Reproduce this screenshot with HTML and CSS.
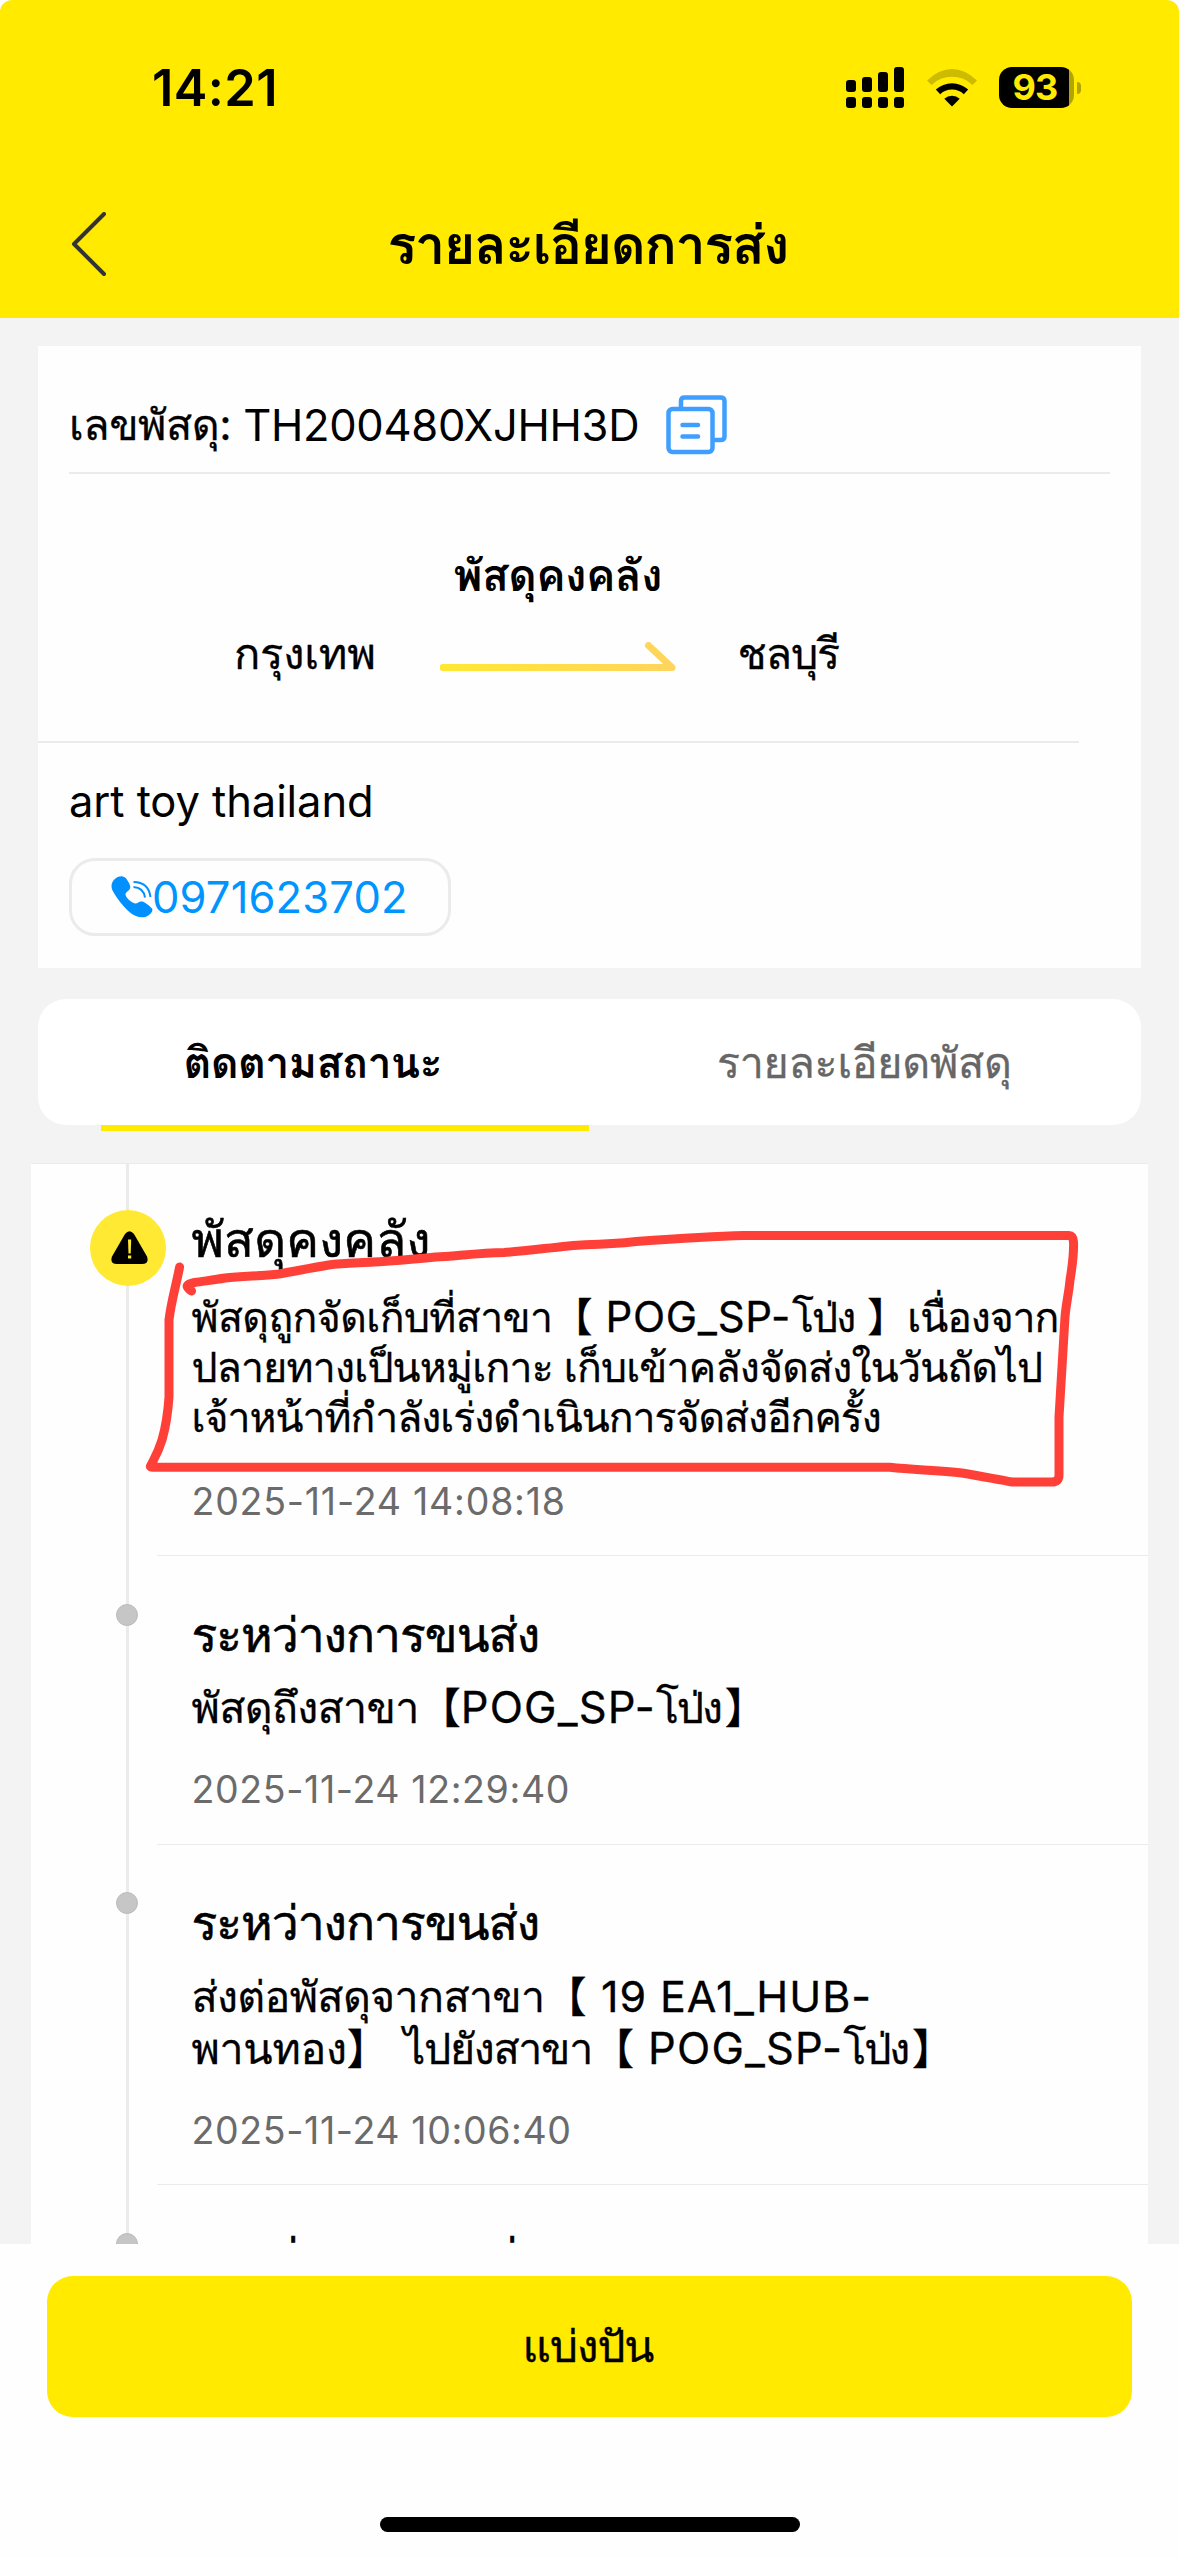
FILE: index.html
```html
<!DOCTYPE html>
<html lang="th">
<head>
<meta charset="utf-8">
<title>รายละเอียดการส่ง</title>
<link rel="stylesheet" href="styles.css">
</head>
<body>
<header class="header">
  <div class="statusbar">
    <span class="clock">14:21</span>
    <div class="indicators">
      <svg class="signal" width="58" height="41" viewBox="0 0 58 41">
        <rect x="0" y="13" width="10" height="12" rx="3"/><rect x="16" y="10" width="10" height="15" rx="3"/><rect x="32" y="5" width="10" height="20" rx="3"/><rect x="48" y="0" width="10" height="25" rx="3"/>
        <rect x="0" y="30" width="10" height="11" rx="3"/><rect x="16" y="30" width="10" height="11" rx="3"/><rect x="32" y="30" width="10" height="11" rx="3"/><rect x="48" y="30" width="10" height="11" rx="3"/>
      </svg>
      <svg class="wifi" width="50" height="38" viewBox="0 0 50 38">
        <path d="M0 11.500Q12 0 25 0Q38 0 50 11.500L45.500 16A29.500 29.500 0 0 0 4.500 16Z" fill="#000" fill-opacity=".2"/>
        <path d="M8.800 20.600A24 24 0 0 1 41.200 20.600L36.800 25.200A17.500 17.500 0 0 0 13.200 25.200Z"/>
        <path d="M17.300 29.800A11.500 11.500 0 0 1 32.700 29.800L25 37.500Z"/>
      </svg>
      <div class="battery"><span class="battery-level">93</span><i class="battery-tip"></i></div>
    </div>
  </div>
  <div class="navbar">
    <svg class="back" width="36" height="64" viewBox="0 0 36 64"><path d="M33 2L3 32L33 62"/></svg>
    <h1 class="nav-title">รายละเอียดการส่ง</h1>
  </div>
</header>

<main class="content">
  <section class="card">
    <div class="parcel">
      <span class="parcel-label">เลขพัสดุ:</span><span class="parcel-number">TH200480XJHH3D</span>
      <svg class="copy" width="61" height="60" viewBox="0 0 61 60">
        <path d="M15 14V6Q15 2.500 18.500 2.500H54.500Q58.500 2.500 58.500 6V41.500Q58.500 45 54.500 45H48"/>
        <rect x="2.500" y="14" width="44" height="43" rx="4"/>
        <path d="M16.500 30H32M16.500 41.500H32"/>
      </svg>
    </div>
    <div class="route">
      <div class="route-status">พัสดุคงคลัง</div>
      <div class="route-line">
        <span class="route-from">กรุงเทพ</span>
        <svg class="route-arrow" width="236" height="30" viewBox="0 0 236 30">
          <defs><linearGradient id="arrow" gradientUnits="userSpaceOnUse" x1="0" y1="0" x2="236" y2="0"><stop offset="0" stop-color="#ffe833"/><stop offset="1" stop-color="#ffd45e"/></linearGradient></defs>
          <path d="M3 25.500H232L208.500 3.500"/>
        </svg>
        <span class="route-to">ชลบุรี</span>
      </div>
    </div>
    <div class="contact">
      <div class="contact-name">art toy thailand</div>
      <a class="phone">
        <svg class="phone-icon" width="42" height="42" viewBox="0 0 42 42">
          <path d="M4.500 2.500C8-.6 13-.8 15.500 3C18 6.500 20 10 19 12.500C18 15 14.500 16 14.500 18.500C14.500 21.500 21.500 27.500 24.500 27.500C27 27.500 28 25 31 25.500C34 26 39.500 30.500 41 32.500C42.500 35 39.500 38 36.500 40C32 42.500 24 41 19 36.500C12.500 31 5.500 22 1.500 14.500C-.5 10 .5 5.500 4.500 2.500Z"/>
          <g fill="none" stroke="#0090ff" stroke-width="2"><path d="M22.500 6Q37.500 6 39.500 21"/><path d="M22.500 11Q32.500 11.500 34 21.500"/></g>
        </svg>
        <span class="phone-number">0971623702</span>
      </a>
    </div>
  </section>

  <nav class="tabs">
    <div class="tab tab-active">ติดตามสถานะ</div>
    <div class="tab">รายละเอียดพัสดุ</div>
  </nav>

  <section class="timeline">
    <article class="event event-current">
      <span class="warn"><svg width="37" height="34" viewBox="0 0 37 34"><path d="M14 3Q18.500-2.500 23 3L36 25.500Q38.500 33 31 33H6Q-1.500 33 1 25.500Z"/><path d="M17 8.500h3.200l-.5 14h-2.200z" fill="#ffe933"/><rect x="17" y="24.500" width="3.200" height="3" fill="#ffe933"/></svg></span>
      <h2 class="event-title title-hold">พัสดุคงคลัง</h2>
      <p class="event-body"><span class="s-stored">พัสดุถูกจัดเก็บที่สาขา</span><span class="bracket-l">【</span><span class="s-pog">POG_SP-</span><span class="s-pong">โป่ง</span><span class="bracket-r">】</span><span class="s-because">เนื่องจาก</span><br><span class="s-island">ปลายทางเป็นหมู่เกาะ เก็บเข้าคลังจัดส่งในวันถัดไป</span><br><span class="s-retry">เจ้าหน้าที่กำลังเร่งดำเนินการจัดส่งอีกครั้ง</span></p>
      <time class="event-time time-wide">2025-11-24 14:08:18</time>
    </article>
    <article class="event">
      <i class="dot"></i>
      <h2 class="event-title">ระหว่างการขนส่ง</h2>
      <p class="event-body"><span class="s-arrive">พัสดุถึงสาขา</span><span class="bracket-l">【</span><span class="s-pog">POG_SP-</span><span class="s-pong">โป่ง</span><span class="bracket-r">】</span></p>
      <time class="event-time">2025-11-24 12:29:40</time>
    </article>
    <article class="event">
      <i class="dot"></i>
      <h2 class="event-title">ระหว่างการขนส่ง</h2>
      <p class="event-body"><span class="s-forward">ส่งต่อพัสดุจากสาขา</span><span class="bracket-l">【</span><span class="s-hub">19 EA1_HUB-</span><br><span class="s-phan">พานทอง</span><span class="bracket-r tight">】</span><span class="s-toward">ไปยังสาขา</span><span class="bracket-l">【</span><span class="s-pog spaced">POG_SP-</span><span class="s-pong">โป่ง</span><span class="bracket-r">】</span></p>
      <time class="event-time">2025-11-24 10:06:40</time>
    </article>
    <article class="event event-next">
      <i class="dot"></i>
      <h2 class="event-title">ระหว่างการขนส่ง</h2>
    </article>
  </section>

  <svg class="markup" width="960" height="280" viewBox="140 1220 960 280">
    <path d="M179.600 1267C176 1286 171 1302 169 1320V1397C168 1412 166 1426 162 1440C158 1453 154 1459 150.500 1466Q150 1467.300 153 1467.300H890C915 1470 938 1470 962 1473C980 1476 995 1479 1012 1482H1052Q1059 1482 1059 1475V1417C1061 1384 1063 1350 1065 1317C1066 1304 1069 1292 1070 1280C1072 1268 1074 1254 1073.500 1242Q1073 1235.500 1069 1235.500H744C720 1236 670 1239 636 1241.500Q614 1244 585 1244.700C560 1246 530 1251 504 1252.500C480 1253 455 1256 435.600 1257C415 1259 393 1261 374 1262C358 1263 343 1263 328.500 1265C311 1268 296 1271 279 1274C261 1276 243 1276 225 1278C214 1280 204 1281 194.600 1282.500C187 1284 184 1286 191.500 1291"/>
  </svg>
</main>

<footer class="footer">
  <button class="share">แบ่งปัน</button>
  <div class="home-indicator"></div>
</footer>
</body>
</html>
```
FILE: styles.css
```css
* { box-sizing: border-box; }
body { margin: 0; width: 1179px; height: 2556px; overflow: hidden; background: #fefefe; color: #000; font-family: Inter, Loma, "Noto Sans CJK JP", sans-serif; white-space: nowrap; }
h1, h2, p { margin: 0; font-weight: 400; }
svg { display: block; flex: none; }

/* Header */
.header { height: 318px; background: #ffea00; border-radius: 12px 12px 0 0; }
.statusbar { height: 172px; padding: 3px 98px 0 152px; display: flex; align-items: center; justify-content: space-between; }
.clock { font-size: 50.500px; font-weight: 600; letter-spacing: .400px; line-height: 60px; }
.indicators { display: flex; align-items: center; gap: 22.500px; }
.battery { display: flex; align-items: center; gap: 3px; }
.battery-level { width: 75px; height: 41px; border-radius: 13px; background: linear-gradient(90deg, #000 70px, #b3a400 70px); color: #ffea00; font-size: 36px; font-weight: 700; letter-spacing: -1px; line-height: 41px; padding-left: 13.500px; }
.battery-tip { width: 4px; height: 12px; border-radius: 0 4px 4px 0; background: #b3a400; }
.navbar { height: 146px; padding-left: 71px; display: flex; align-items: center; }
.back { margin-bottom: 2px; fill: none; stroke: #333; stroke-width: 4; stroke-linecap: round; stroke-linejoin: round; }
.nav-title { margin-left: 280.500px; font-size: 54px; font-weight: 700; letter-spacing: -1.530px; line-height: 70px; }

/* Parcel summary */
.content { position: relative; height: 1926px; padding: 28px 31px 0; background: #f3f3f3; overflow: hidden; }
.card { height: 622px; margin: 0 7px; background: #fefefe; }
.parcel { height: 128px; margin: 0 31px; padding-top: 32px; display: flex; align-items: center; border-bottom: 2px solid #ebebeb; font-size: 43.500px; }
.parcel-label { font-size: 43px; letter-spacing: -.460px; -webkit-text-stroke: .3px; }
.parcel-number { margin-left: 12px; letter-spacing: -.290px; }
.copy { margin-left: 27px; fill: none; stroke: #409eff; stroke-width: 4.500; stroke-linecap: round; }
.route { width: 1041px; height: 269px; padding-top: 71px; border-bottom: 2px solid #ebebeb; line-height: 60px; }
.route-status { padding-left: 415.500px; font-size: 44px; font-weight: 700; letter-spacing: -.590px; }
.route-line { margin-top: 18px; padding-left: 196px; display: flex; align-items: center; font-size: 43.500px; -webkit-text-stroke: .3px; }
.route-from { letter-spacing: -.270px; }
.route-arrow { margin: 7px 62px 0 64px; fill: none; stroke: url(#arrow); stroke-width: 7; stroke-linecap: round; stroke-linejoin: round; }
.route-to { font-size: 43px; letter-spacing: -1.100px; }
.contact { padding: 28px 31px 0; }
.contact-name { font-size: 43.500px; letter-spacing: -.080px; line-height: 60px; }
.phone { width: 382px; height: 78px; margin-top: 27px; padding-left: 38.500px; display: flex; align-items: center; border: 3px solid #ebebeb; border-radius: 26px; color: #0094ff; }
.phone-icon { fill: #0090ff; }
.phone-number { margin-left: -.500px; font-size: 43.500px; letter-spacing: .150px; }

/* Tabs */
.tabs { position: relative; height: 126px; margin: 31px 7px 0; display: flex; background: #fff; border-radius: 28px; }
.tab { flex: 1; padding-right: 2px; font-size: 43px; line-height: 126px; letter-spacing: -.280px; text-align: center; color: #666; -webkit-text-stroke: .3px; }
.tab-active { font-weight: 700; letter-spacing: -.660px; color: #000; -webkit-text-stroke: 0; }
.tab-active::after { content: ""; position: absolute; left: 63px; bottom: -6px; width: 488px; height: 6px; background: #ffea00; }

/* Timeline */
.timeline { position: relative; margin-top: 38px; border-top: 1px solid #ebebeb; background: #fefefe; }
.timeline::before { content: ""; position: absolute; left: 95px; top: 0; bottom: 0; width: 3px; background: #ebebeb; }
.event { position: relative; margin-left: 126px; padding: 48.500px 0 28.500px 34.500px; border-bottom: 1px solid #ebebeb; }
.event-current { padding-top: 46px; }
.event-next { padding-top: 41px; }
.warn { position: absolute; left: -67px; top: 46px; width: 76px; height: 76px; border-radius: 50%; background: #ffe933; display: flex; align-items: center; justify-content: center; padding-left: 2px; }
.dot { position: absolute; left: -41px; top: 47.500px; width: 22px; height: 22px; border: 1px solid #bbb; border-radius: 50%; background: #c6c6c6; }
.event-title { font-size: 48px; letter-spacing: -1px; line-height: 60px; -webkit-text-stroke: .6px; }
.title-hold { font-size: 49px; letter-spacing: .210px; }
.event-body { margin-top: 16.500px; font-size: 43px; line-height: 52px; -webkit-text-stroke: .3px; }
.event-body span { line-height: 0; }
.event-time { display: block; margin-top: 32px; font-size: 37.500px; letter-spacing: .620px; line-height: 50px; color: #6b6b6b; }
.time-wide { margin-top: 35px; letter-spacing: .780px; }

.bracket-l, .bracket-r { font-size: 42px; font-family: "Noto Sans CJK JP", sans-serif; }
.bracket-r { margin-left: 4px; }
.tight { margin-left: 0; }
.s-pog { font-size: 43.500px; letter-spacing: 1.170px; }
.s-pong { letter-spacing: -2.200px; }
.spaced { margin-left: 14px; }
.s-arrive { letter-spacing: -.700px; }
.s-forward { letter-spacing: -.700px; }
.s-hub { margin-left: 14.500px; letter-spacing: .920px; }
.s-phan { letter-spacing: -.320px; }
.s-toward { margin-left: 15px; letter-spacing: -1.340px; }

.event-current .event-body { margin-top: 21.500px; font-size: 41px; line-height: 50px; }
.event-current .bracket-l { font-size: 40px; }
.event-current .bracket-r { margin-left: 13px; font-size: 40px; }
.event-current .s-pog { margin-left: 13px; font-size: 42px; letter-spacing: .700px; }
.event-current .s-pong { margin-left: 1px; letter-spacing: -1.900px; }
.s-stored { letter-spacing: -.600px; }
.s-because { letter-spacing: -1.100px; }
.s-island { letter-spacing: -.800px; }
.s-retry { letter-spacing: -1.040px; }

/* Hand-drawn highlight over the current event */
.markup { position: absolute; left: 140px; top: 902px; fill: none; stroke: #ff4038; stroke-width: 9; stroke-linecap: round; stroke-linejoin: round; }

/* Footer */
.footer { height: 312px; padding: 32px 47px 0; display: flex; flex-direction: column; align-items: center; background: #fefefe; }
.share { width: 1085px; height: 141px; padding: 0 3px 2px 0; border: 0; border-radius: 26px; background: #ffea00; color: #000; font: inherit; font-size: 44px; letter-spacing: -1px; -webkit-text-stroke: .4px; }
.home-indicator { width: 420px; height: 15px; margin-top: 100px; border-radius: 8px; background: #000; }
```
